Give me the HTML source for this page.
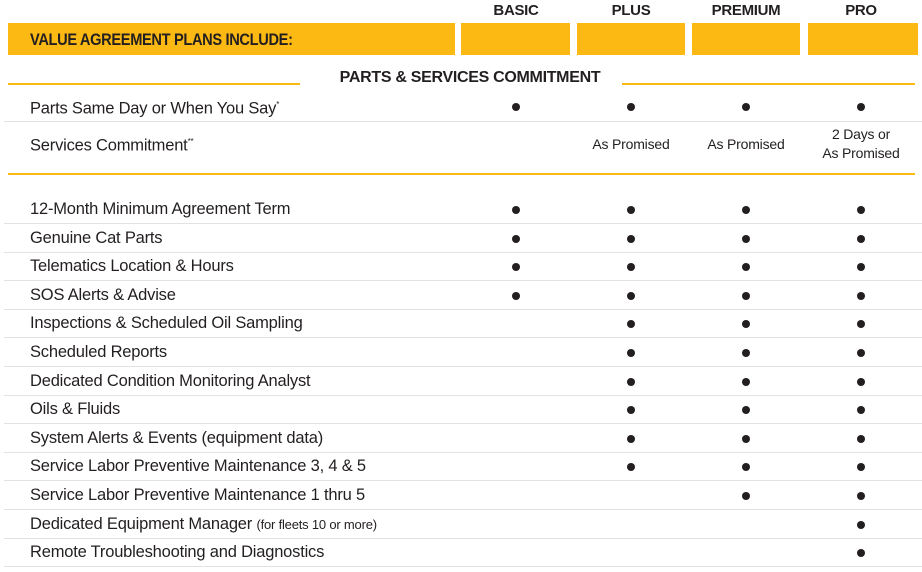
<!DOCTYPE html>
<html><head><meta charset="utf-8"><style>
body{margin:0;width:922px;height:572px;background:#fff;position:relative;overflow:hidden;font-family:"Liberation Sans",Arial,sans-serif;color:#231f20}
.a{position:absolute}
.bar{background:#fdb913;top:23px;height:32px}
.hd{top:2px;font-weight:bold;font-size:15px;width:110px;text-align:center;letter-spacing:-0.3px}
.sep{position:absolute;left:4px;width:918px;height:1px;background:#e2e2e2}
.lab{position:absolute;left:30px;font-size:16.5px;letter-spacing:-0.2px;line-height:18px}
.d{position:absolute;width:8px;height:8px;border-radius:50%;background:#231f20}
.t{position:absolute;font-size:14px;text-align:center;width:110px;line-height:19px;letter-spacing:-0.2px}
</style></head><body>
<div class="a hd" style="left:461px">BASIC</div>
<div class="a hd" style="left:576px">PLUS</div>
<div class="a hd" style="left:691px">PREMIUM</div>
<div class="a hd" style="left:806px">PRO</div>
<div class="a bar" style="left:8px;width:447px"></div>
<div class="a bar" style="left:461px;width:109px"></div>
<div class="a bar" style="left:577px;width:108px"></div>
<div class="a bar" style="left:692px;width:108px"></div>
<div class="a bar" style="left:808px;width:110px"></div>
<div class="a" style="left:30px;top:30px;font-weight:bold;font-size:17px;letter-spacing:-0.4px;transform:scaleX(0.86);transform-origin:0 0;white-space:nowrap">VALUE AGREEMENT PLANS INCLUDE:</div>
<div class="a" style="left:8px;top:83px;width:292px;height:2px;background:#fdb913"></div>
<div class="a" style="left:622px;top:83px;width:293px;height:2px;background:#fdb913"></div>
<div class="a" style="left:300px;top:69px;width:340px;text-align:center;font-weight:bold;font-size:16px;letter-spacing:-0.3px">PARTS &amp; SERVICES COMMITMENT</div>
<div class="lab" style="top:96px">Parts Same Day or When You Say<sup style="font-size:8px">*</sup></div>
<div class="sep" style="top:121px"></div>
<div class="lab" style="top:133px">Services Commitment<sup style="font-size:8px">**</sup></div>
<div class="t" style="left:576px;top:135px">As Promised</div>
<div class="t" style="left:691px;top:135px">As Promised</div>
<div class="t" style="left:806px;top:125px">2 Days or<br>As Promised</div>
<div class="a" style="left:8px;top:173px;width:907px;height:2px;background:#fdb913"></div>
<div id="rows"></div>
<script>
var rows=[["12-Month Minimum Agreement Term",4],["Genuine Cat Parts",4],["Telematics Location &amp; Hours",4],["SOS Alerts &amp; Advise",4],["Inspections &amp; Scheduled Oil Sampling",3],["Scheduled Reports",3],["Dedicated Condition Monitoring Analyst",3],["Oils &amp; Fluids",3],["System Alerts &amp; Events (equipment data)",3],["Service Labor Preventive Maintenance 3, 4 &amp; 5",3],["Service Labor Preventive Maintenance 1 thru 5",2],["Dedicated Equipment Manager <span style='font-size:13px'>(for fleets 10 or more)</span>",1],["Remote Troubleshooting and Diagnostics",1]];
var cx=[516,631,746,861],h="";
h+='<div class="d" style="left:512px;top:103px"></div><div class="d" style="left:627px;top:103px"></div><div class="d" style="left:742px;top:103px"></div><div class="d" style="left:857px;top:103px"></div>';
for(var i=0;i<rows.length;i++){var y=210+i*28.6;
h+='<div class="lab" style="top:'+Math.round(y-10)+'px">'+rows[i][0]+'</div>';
h+='<div class="sep" style="top:'+Math.round(y+13)+'px"></div>';
for(var c=4-rows[i][1];c<4;c++)h+='<div class="d" style="left:'+(cx[c]-4)+'px;top:'+Math.round(y-4)+'px"></div>';}
document.getElementById("rows").innerHTML=h;
</script>
</body></html>
